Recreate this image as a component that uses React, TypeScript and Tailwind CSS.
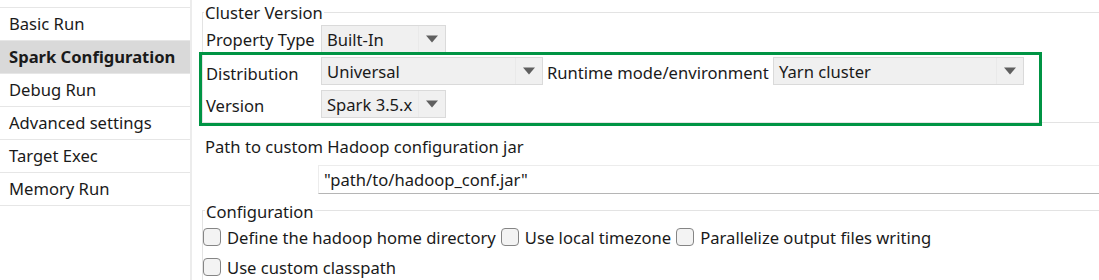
const navItems = [
  "Basic Run",
  "Spark Configuration",
  "Debug Run",
  "Advanced settings",
  "Target Exec",
  "Memory Run",
];

function Arrow() {
  return (
    <svg width="12" height="8" viewBox="0 0 12 8" className="block">
      <path d="M0 0.5 L12 0.5 L6 7.5 Z" fill="#5f5f5f" />
    </svg>
  );
}

function Combo({ value, className }: { value: string; className: string }) {
  return (
    <div
      className={`flex h-[28px] items-center border border-[#dadada] bg-[#f0f0f0] ${className}`}
    >
      <span className="flex-1 truncate pl-[5px] pt-[2px] leading-[24px]">{value}</span>
      <span className="flex h-full w-[27px] items-center justify-center border-l border-[#e9e9e9]">
        <Arrow />
      </span>
    </div>
  );
}

function Checkbox({ label }: { label: string }) {
  return (
    <label className="flex items-center gap-[6px]">
      <span className="block h-[18px] w-[18px] rounded-[4px] border border-[#858585] bg-[#f3f3f3]" />
      <span className="pt-[2px] leading-[24px]">{label}</span>
    </label>
  );
}

export default function App() {
  return (
    <div
      className="relative flex h-[280px] w-[1099px] overflow-hidden bg-white text-[16.6px] text-[#1a1a1a]"
      style={{ fontFamily: '"Noto Sans", "Open Sans", sans-serif' }}
    >
      {/* left nav */}
      <div className="h-full w-[192px] shrink-0 border-r-2 border-[#ececec]">
        <div className="mt-[7px] border-t border-[#e6e6e6]">
          {navItems.map((item, i) => (
            <div
              key={item}
              className={`flex h-[33px] items-center border-b border-[#e6e6e6] pl-[9px] pt-[1px] ${
                i === 1 ? "bg-[#d9d9d9] font-bold" : ""
              }`}
            >
              {item}
            </div>
          ))}
        </div>
      </div>

      {/* main */}
      <div className="flex min-w-0 flex-1 flex-col">
        {/* Cluster Version group */}
        <div className="ml-[10px] mt-[12px] border-l border-t border-b border-[#e3e3e3] pb-[3px]">
          <div className="-mt-[11px] ml-[1px] w-fit bg-white px-[1px] leading-[22px]">
            Cluster Version
          </div>
          <div className="flex h-[30px] items-center pl-[3px]">
            <span className="w-[115px] pt-[2px] leading-[24px]">Property Type</span>
            <Combo value="Built-In" className="w-[125px]" />
          </div>
          <div className="flex h-[34px] items-center pl-[3px]">
            <span className="w-[115px] pt-[5px] leading-[24px]">Distribution</span>
            <Combo value="Universal" className="w-[222px]" />
            <span className="ml-[4px] w-[226px] pt-[3px] leading-[24px]">Runtime mode/environment</span>
            <Combo value="Yarn cluster" className="w-[251px]" />
          </div>
          <div className="flex h-[31px] items-center pl-[3px]">
            <span className="w-[115px] pt-[5px] leading-[24px]">Version</span>
            <Combo value="Spark 3.5.x" className="w-[125px]" />
          </div>
        </div>

        {/* Hadoop configuration jar */}
        <div className="ml-[13px] mt-[12px] leading-[24px]">
          Path to custom Hadoop configuration jar
        </div>
        <div className="ml-[126px] mt-[6px] flex h-[29px] items-center border-l border-t border-[#ececec] border-b border-b-[#b5b5b5] pl-[5px] pt-[2px]">
          "path/to/hadoop_conf.jar"
        </div>

        {/* Configuration group */}
        <div className="ml-[10px] mt-[16px] flex-1 border-l border-t border-[#e3e3e3]">
          <div className="-mt-[10px] ml-[2px] w-fit bg-white px-[1px] leading-[22px]">
            Configuration
          </div>
          <div className="-mt-[1px] flex h-[30px] items-center gap-[5px]">
            <Checkbox label="Define the hadoop home directory" />
            <Checkbox label="Use local timezone" />
            <Checkbox label="Parallelize output files writing" />
          </div>
          <div className="flex h-[30px] items-center">
            <Checkbox label="Use custom classpath" />
          </div>
        </div>
      </div>

      {/* highlight frame */}
      <div className="pointer-events-none absolute left-[199px] top-[52px] h-[74px] w-[843px] border-[3px] border-[#009444]" />
    </div>
  );
}
